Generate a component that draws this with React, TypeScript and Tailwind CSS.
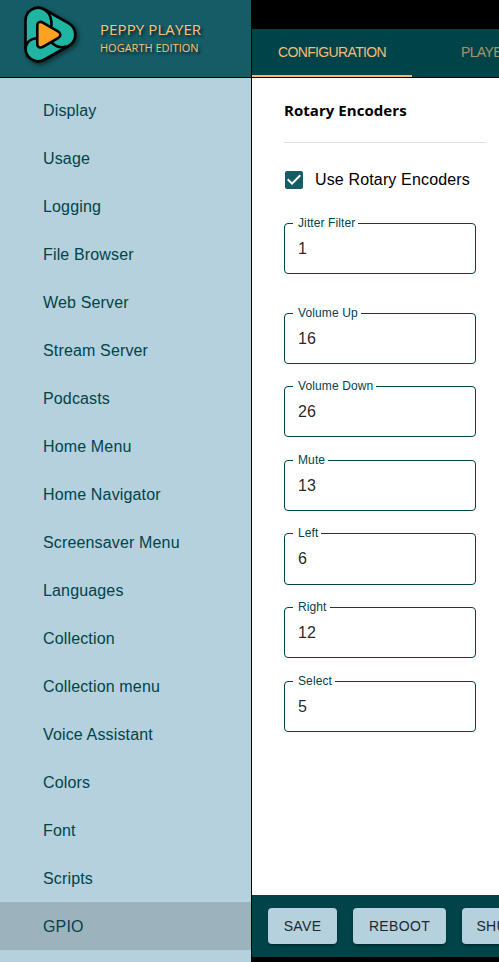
const menu = [
  'Display', 'Usage', 'Logging', 'File Browser', 'Web Server', 'Stream Server', 'Podcasts', 'Home Menu',
  'Home Navigator', 'Screensaver Menu', 'Languages', 'Collection', 'Collection menu', 'Voice Assistant',
  'Colors', 'Font', 'Scripts', 'GPIO',
];

const pins = [
  { label: 'Volume Up', value: '16' },
  { label: 'Volume Down', value: '26' },
  { label: 'Mute', value: '13' },
  { label: 'Left', value: '6' },
  { label: 'Right', value: '12' },
  { label: 'Select', value: '5' },
];

function Logo() {
  return (
    <svg
      className="mt-1 ml-5 h-[62px] w-[60px] shrink-0 drop-shadow-[2px_2px_2px_rgba(0,0,0,0.5)]"
      viewBox="0 0 60 62"
      fill="none"
      stroke="#000"
      strokeWidth="2.6"
      strokeLinejoin="round"
    >
      <path
        d="M5.500 17 A12.700 12.700 0 0 1 24.500 5.500 L48.500 19.200 A13 13 0 0 1 48.500 42 L24.500 55.500 A12.700 12.700 0 0 1 5.500 44 Z"
        fill="#1fb5a2"
      />
      <path d="M25 6 C29.500 9 32 14 31.500 22.500" />
      <path d="M5.500 45 C6 38.500 10.500 34.500 17 34.300" />
      <path d="M31 38 C35.500 42.500 41 44.500 46.500 42.300" />
      <path
        d="M17.300 21.500 C17.300 18 20.300 17 23.300 18.800 L38 27.300 C41.200 29.200 41.200 32.300 38 34.200 L23.300 42.600 C20.300 44.300 17.300 43.300 17.300 40 Z"
        fill="#fca120"
      />
    </svg>
  );
}

function Field({ label, value }: { label: string; value: string }) {
  return (
    <fieldset className="h-[57.2px] w-48 rounded border border-[#00444a] pl-2">
      <legend className="h-[13px] pr-[3px] pl-[5px] text-[12px] leading-[13px] tracking-[0.11px] text-[#00444a]">{label}</legend>
      <div className="pt-[9px] pl-[5px] text-base leading-5 text-black/87">{value}</div>
    </fieldset>
  );
}

function Tab({ label, active }: { label: string; active?: boolean }) {
  return (
    <div
      className={
        active
          ? 'flex w-40 shrink-0 items-center justify-center border-b-2 border-[#ffb86b] text-[#f4bd78]'
          : 'flex w-40 shrink-0 items-center justify-center pr-[3px] pb-0.5 text-[#a49664]'
      }
    >
      {label}
    </div>
  );
}

function Button({ label, width }: { label: string; width: string }) {
  return (
    <button
      className={`${width} h-9 shrink-0 rounded bg-[#b4d1dd] text-center text-sm tracking-[0.35px] text-[#1b292d] shadow-[0_3px_1px_-2px_rgba(0,0,0,0.2),0_2px_2px_0_rgba(0,0,0,0.14),0_1px_5px_0_rgba(0,0,0,0.12)]`}
    >
      {label}
    </button>
  );
}

export default function App() {
  return (
    <div className="flex h-[962px] w-[499px] overflow-hidden bg-white font-['Liberation_Sans',Arial,sans-serif]">
      <aside className="flex w-[252px] shrink-0 flex-col border-r border-black bg-[#b4d1dd]">
        <header className="flex h-[78px] shrink-0 border-b border-black bg-[#155c66]">
          <Logo />
          <div className="ml-5 pt-[19px] font-['Open_Sans','Noto_Sans',sans-serif] whitespace-nowrap text-[#fbc27c] [text-shadow:2px_2px_3px_rgba(0,0,0,0.7)]">
            <div className="text-[15px] leading-[21px] tracking-[0.1px]">PEPPY PLAYER</div>
            <div className="text-[11px] leading-[15px]">HOGARTH EDITION</div>
          </div>
        </header>
        <nav className="pt-2">
          {menu.map((item) => (
            <div
              key={item}
              className={
                item === 'GPIO'
                  ? 'flex h-12 items-center bg-[#9cb2bd] pt-0.5 pl-[43px] text-base tracking-[0.15px] text-[#00444a]'
                  : 'flex h-12 items-center pt-0.5 pl-[43px] text-base tracking-[0.15px] text-[#00444a]'
              }
            >
              {item}
            </div>
          ))}
        </nav>
      </aside>
      <div className="flex min-w-0 flex-1 flex-col">
        <div className="h-[29px] shrink-0 bg-black" />
        <div className="flex h-[49px] shrink-0 overflow-hidden border-b border-black bg-[#00444a] text-sm tracking-[-0.64px]">
          <Tab label="CONFIGURATION" active />
          <Tab label="PLAYERS" />
        </div>
        <main className="flex flex-1 flex-col pr-[13px] pl-8">
          <h1 className="flex h-[65px] items-center border-b border-[#e0e0e0] font-['Open_Sans','Noto_Sans',sans-serif] text-[15px] font-bold tracking-[0.05px] whitespace-nowrap text-black">
            Rotary Encoders
          </h1>
          <label className="mt-[25px] flex h-6 items-center text-base tracking-[0.15px] whitespace-nowrap text-black">
            <svg className="-ml-0.5 mr-[9px] size-6 shrink-0" viewBox="0 0 24 24" fill="#155c66">
              <path d="M19 3H5c-1.110 0-2 .9-2 2v14c0 1.100.890 2 2 2h14c1.110 0 2-.9 2-2V5c0-1.100-.890-2-2-2zm-9 14l-5-5 1.410-1.410L10 14.170l7.590-7.590L19 8l-9 9z" />
            </svg>
            Use Rotary Encoders
          </label>
          <div className="mt-[25px]">
            <Field label="Jitter Filter" value="1" />
          </div>
          <div className="mt-[32.4px] flex flex-col gap-[16.45px]">
            {pins.map((pin) => (
              <Field key={pin.label} label={pin.label} value={pin.value} />
            ))}
          </div>
        </main>
        <footer className="flex h-[62px] shrink-0 items-center gap-4 overflow-hidden bg-[#00444a] pl-4">
          <Button label="SAVE" width="w-[69px]" />
          <Button label="REBOOT" width="w-[93px]" />
          <Button label="SHUTDOWN" width="w-[114px]" />
        </footer>
        <div className="h-[5px] shrink-0 bg-black" />
      </div>
    </div>
  );
}
